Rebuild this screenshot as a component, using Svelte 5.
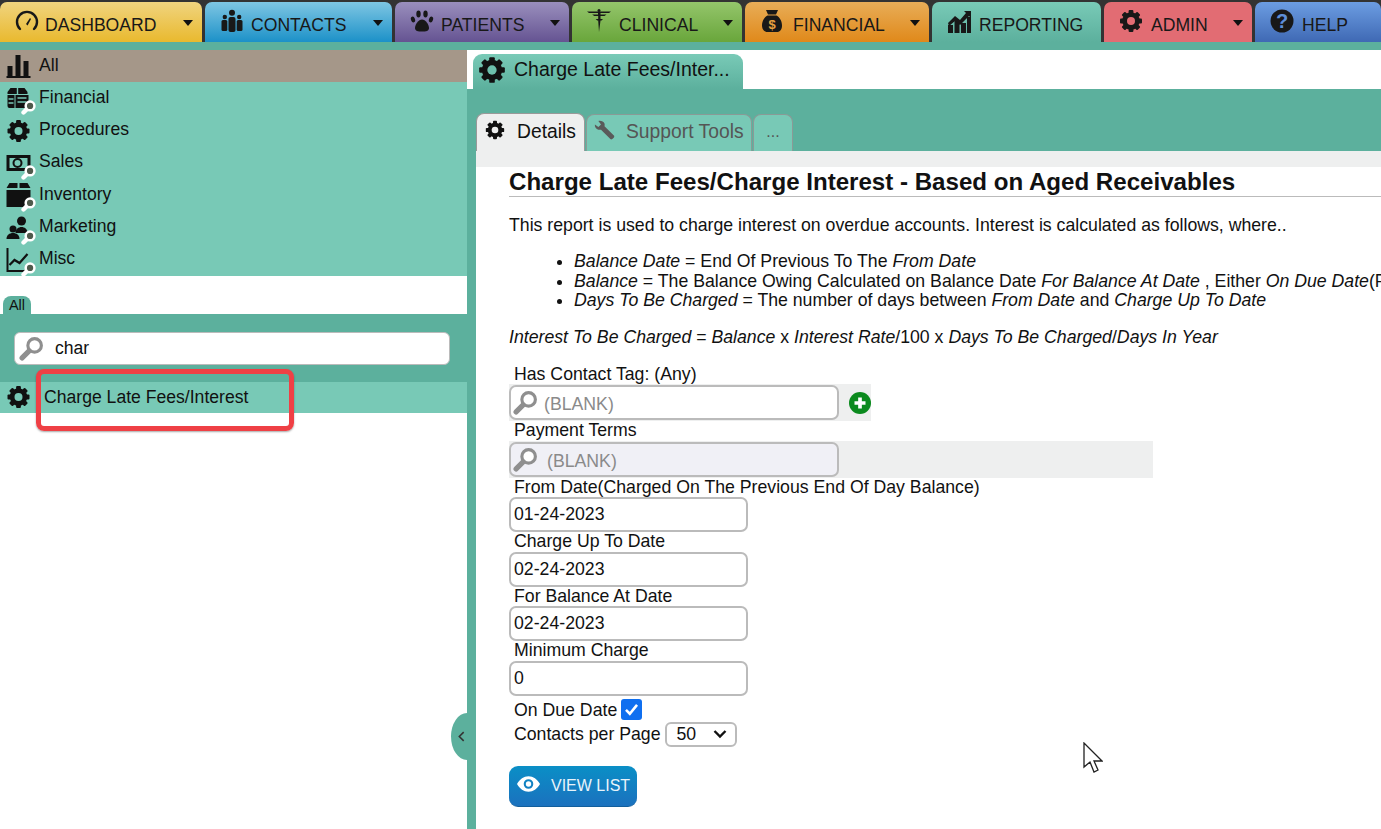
<script>
  const navTabs = [
    { label: 'DASHBOARD', cls: 'dashboard', icon: 'gauge', menu: true },
    { label: 'CONTACTS', cls: 'contacts', icon: 'people', menu: true },
    { label: 'PATIENTS', cls: 'patients', icon: 'paw', menu: true },
    { label: 'CLINICAL', cls: 'clinical', icon: 'caduceus', menu: true },
    { label: 'FINANCIAL', cls: 'financial', icon: 'bag', menu: true },
    { label: 'REPORTING', cls: 'reporting', icon: 'chart', menu: false },
    { label: 'ADMIN', cls: 'admin', icon: 'gear', menu: true },
    { label: 'HELP', cls: 'help', icon: 'question', menu: false }
  ]

  const sideItems = [
    { label: 'All', icon: 'bars', active: true },
    { label: 'Financial', icon: 'register', lens: true },
    { label: 'Procedures', icon: 'gear' },
    { label: 'Sales', icon: 'money', lens: true },
    { label: 'Inventory', icon: 'box', lens: true },
    { label: 'Marketing', icon: 'person', lens: true },
    { label: 'Misc', icon: 'line', lens: true }
  ]

  const dateFields = [
    { label: 'From Date(Charged On The Previous End Of Day Balance)', value: '01-24-2023' },
    { label: 'Charge Up To Date', value: '02-24-2023' },
    { label: 'For Balance At Date', value: '02-24-2023' },
    { label: 'Minimum Charge', value: '0' }
  ]
</script>

{#snippet glyph(name)}
  {#if name === 'gear'}
    <svg viewBox="0 0 24 24" class="icon">
      <circle cx="12" cy="12" r="6.4" fill="none" stroke="currentColor" stroke-width="4.6" />
      <g fill="currentColor">
        <rect x="9.6" y="1" width="4.8" height="22" rx="1" />
        <rect x="9.6" y="1" width="4.8" height="22" rx="1" transform="rotate(45 12 12)" />
        <rect x="9.6" y="1" width="4.8" height="22" rx="1" transform="rotate(90 12 12)" />
        <rect x="9.6" y="1" width="4.8" height="22" rx="1" transform="rotate(135 12 12)" />
      </g>
      <circle cx="12" cy="12" r="4" fill="var(--hole, #78c9b6)" />
    </svg>
  {:else if name === 'gauge'}
    <svg viewBox="0 0 24 24" class="icon">
      <path d="M5 20a10 10 0 1 1 14 0" fill="none" stroke="currentColor" stroke-width="2.4" stroke-linecap="round" />
      <path d="M11 15l4-6 1 1-3.400 6.400z" fill="currentColor" />
    </svg>
  {:else if name === 'people'}
    <svg viewBox="0 0 24 24" class="icon">
      <g fill="currentColor">
        <circle cx="12" cy="3.800" r="3" />
        <rect x="8.500" y="8" width="7" height="15" rx="2" />
        <circle cx="4.800" cy="8" r="2.200" />
        <rect x="1.500" y="11" width="5.800" height="11" rx="1.500" />
        <circle cx="19.200" cy="8" r="2.200" />
        <rect x="16.700" y="11" width="5.800" height="11" rx="1.500" />
      </g>
    </svg>
  {:else if name === 'paw'}
    <svg viewBox="0 0 24 24" class="icon">
      <g fill="currentColor">
        <ellipse cx="8.500" cy="5" rx="2.200" ry="3.400" />
        <ellipse cx="15.500" cy="5" rx="2.200" ry="3.400" />
        <ellipse cx="3" cy="10.500" rx="2" ry="3" transform="rotate(-20 3 10.500)" />
        <ellipse cx="21" cy="10.500" rx="2" ry="3" transform="rotate(20 21 10.500)" />
        <path d="M12 10.500c3.500 0 7 5 7 8.500 0 3-3 3.500-7 3.500s-7-.5-7-3.500c0-3.500 3.500-8.500 7-8.500z" />
      </g>
    </svg>
  {:else if name === 'caduceus'}
    <svg viewBox="0 0 24 24" class="icon">
      <g fill="currentColor">
        <path d="M0 2.500h24l-2 1.500h-8.500v1.500h6l-2 1.500h-4v3h2.500l-1.500 1.500h-1L12 23l-.8-11.500h-1L8.700 10h2.500V7h-4l-2-1.500h5.800V4H2z" />
        <circle cx="12" cy="1.500" r="1.500" />
      </g>
    </svg>
  {:else if name === 'bag'}
    <svg viewBox="0 0 24 24" class="icon">
      <path fill="currentColor" d="M6 1h12l-2 4.500H8zM7.500 6.500h9c3.500 2 5.500 6 5.500 10 0 4-2 6.500-5 6.500H7.500c-3 0-5.500-2.500-5.500-6.500s2-8 5.500-10z" />
      <text x="12" y="20" text-anchor="middle" class="bag-sign">$</text>
    </svg>
  {:else if name === 'chart'}
    <svg viewBox="0 0 24 24" class="icon">
      <g fill="currentColor">
        <rect x="1" y="16" width="5" height="8" />
        <rect x="7.500" y="12" width="5" height="12" />
        <rect x="14" y="14" width="5" height="10" />
        <rect x="20" y="8" width="4" height="16" />
        <path d="M1 14l7-7 5 4 6-7-2-2h7v7l-2-2-9 9-5-4-6 5z" />
      </g>
    </svg>
  {:else if name === 'question'}
    <svg viewBox="0 0 24 24" class="icon">
      <circle cx="12" cy="12" r="11.500" fill="currentColor" />
      <text x="12" y="19" text-anchor="middle" class="q-sign">?</text>
    </svg>
  {:else if name === 'bars'}
    <svg viewBox="0 0 24 24" class="icon">
      <g fill="currentColor">
        <rect x="1" y="12" width="5" height="10" />
        <rect x="9" y="1" width="5" height="21" />
        <rect x="17" y="7" width="5" height="15" />
        <rect x="0" y="22" width="24" height="2" />
      </g>
    </svg>
  {:else if name === 'register'}
    <svg viewBox="0 0 24 24" class="icon">
      <path fill="currentColor" d="M4 2h14l3 4v2H1V6zM1 9h7v13H3a2 2 0 0 1-2-2zM9 9h13v11a2 2 0 0 1-2 2H9z" />
      <path d="M2 13h5M2 17h5M11 12h9M11 16h9M11 2v6" stroke="#78c9b6" stroke-width="1.400" />
    </svg>
  {:else if name === 'money'}
    <svg viewBox="0 0 24 24" class="icon">
      <path fill-rule="evenodd" fill="currentColor" d="M0 4h24v16H0zM3 7v10h18V7z" />
      <circle cx="11" cy="12" r="4" fill="none" stroke="currentColor" stroke-width="2" />
    </svg>
  {:else if name === 'box'}
    <svg viewBox="0 0 24 24" class="icon">
      <path fill="currentColor" d="M3 0h8v5H0zM13 0h8l3 5H13zM0 7h24v17H0z" />
    </svg>
  {:else if name === 'person'}
    <svg viewBox="0 0 24 24" class="icon">
      <g fill="currentColor">
        <circle cx="15" cy="5" r="4.500" />
        <path d="M9 17c0-4 3-6 6-6s6 2 6 6z" />
        <circle cx="6.500" cy="13" r="3.500" />
        <path d="M0 23c0-4 3-6 6.500-6s6.500 2 6.500 6z" />
      </g>
    </svg>
  {:else if name === 'line'}
    <svg viewBox="0 0 24 24" class="icon">
      <path d="M1 0v23h23" fill="none" stroke="currentColor" stroke-width="2" />
      <path d="M3 17l5-5 5 3 8-9" fill="none" stroke="currentColor" stroke-width="2.200" />
    </svg>
  {/if}
{/snippet}

{#snippet lens(cls)}
  <svg viewBox="0 0 24 24" class={cls}>
    <path d="M9.500 14.500L3 21" stroke="#8f8f8f" stroke-width="5" stroke-linecap="round" />
    <circle cx="15" cy="9" r="6.500" fill="#fff" stroke="#8f8f8f" stroke-width="3" />
  </svg>
{/snippet}

{#snippet badge()}
  <svg viewBox="0 0 24 24" class="minilens">
    <path d="M9 15L4 20" stroke="#fff" stroke-width="7" stroke-linecap="round" />
    <circle cx="14.500" cy="9.500" r="7" fill="#4f5a4c" stroke="#fff" stroke-width="4" />
  </svg>
{/snippet}

<div class="page">
  <nav class="topnav">
    {#each navTabs as tab}
      <div class="navtab {tab.cls}">
        <span class="navicon">{@render glyph(tab.icon)}</span>
        <span class="navlabel">{tab.label}</span>
        {#if tab.menu}<span class="caret"></span>{/if}
      </div>
    {/each}
  </nav>

  <div class="workspace">
    <aside class="sidebar">
      <ul class="sidelist">
        {#each sideItems as item}
          <li class:active={item.active}>
            <span class="sideicon">
              {@render glyph(item.icon)}
              {#if item.lens}{@render badge()}{/if}
            </span>
            <span class="sidelabel">{item.label}</span>
          </li>
        {/each}
      </ul>

      <div class="alltab">All</div>
      <div class="searchbar">
        <div class="searchbox">
          {@render lens('searchlens')}
          <span>char</span>
        </div>
      </div>
      <div class="result">
        <span class="sideicon">{@render glyph('gear')}</span>
        Charge Late Fees/Interest
      </div>

      <div class="annotation"></div>
      <button class="collapse" aria-label="Collapse">
        <svg viewBox="0 0 8 12" width="7" height="11">
          <path d="M6.500 1L1.500 6l5 5" fill="none" stroke="#333" stroke-width="1.800" />
        </svg>
      </button>
    </aside>

    <main class="main">
      <div class="doctabs">
        <div class="doctab">
          <span class="docicon">{@render glyph('gear')}</span>
          Charge Late Fees/Inter...
        </div>
      </div>

      <div class="panel">
        <div class="subtabs">
          <div class="subtab current">
            <span class="subicon">{@render glyph('gear')}</span>
            Details
          </div>
          <div class="subtab support">
            <svg viewBox="0 0 24 24" class="wrench">
              <path fill="#5a5a5a" d="M1 5l4-4c3-.5 6 .5 7 3 .3 1 .3 2 0 3l11 11c1 1.500-2.500 5-4 4L8 11c-1 .3-2 .3-3 0C2.500 10 .5 8 1 5l4 3 3-3-3-4z" />
            </svg>
            Support Tools
          </div>
          <div class="subtab more">...</div>
        </div>

        <div class="sheet">
          <div class="report">
            <h1>Charge Late Fees/Charge Interest - Based on Aged Receivables</h1>
            <p class="intro">This report is used to charge interest on overdue accounts. Interest is calculated as follows, where..</p>
            <ul class="terms">
              <li><i>Balance Date</i> = End Of Previous To The <i>From Date</i></li>
              <li><i>Balance</i> = The Balance Owing Calculated on Balance Date <i>For Balance At Date</i> , Either <i>On Due Date</i>(For Balance At Date</li>
              <li><i>Days To Be Charged</i> = The number of days between <i>From Date</i> and <i>Charge Up To Date</i></li>
            </ul>
            <p class="formula"><i>Interest To Be Charged</i> = <i>Balance</i> x <i>Interest Rate</i>/100 x <i>Days To Be Charged</i>/<i>Days In Year</i></p>

            <label class="fieldlabel" for="tag">Has Contact Tag: (Any)</label>
            <div class="lookuprow tagrow">
              <div class="lookup" id="tag">
                {@render lens('fieldlens')}
                <span>(BLANK)</span>
              </div>
              <svg viewBox="0 0 24 24" class="plus">
                <circle cx="12" cy="12" r="12" fill="#0b8a1e" />
                <path d="M12 6v12M6 12h12" stroke="#fff" stroke-width="4" />
              </svg>
            </div>

            <label class="fieldlabel" for="terms">Payment Terms</label>
            <div class="lookuprow termsrow">
              <div class="lookup disabled" id="terms">
                {@render lens('fieldlens')}
                <span>(BLANK)</span>
              </div>
            </div>

            {#each dateFields as field}
              <div class="fieldlabel">{field.label}</div>
              <div class="textbox">{field.value}</div>
            {/each}

            <div class="optionrow">
              On Due Date
              <span class="checkbox">
                <svg viewBox="0 0 20 20" width="17" height="17">
                  <path d="M3.500 10.500l4.500 4.500L16.500 4.500" fill="none" stroke="#fff" stroke-width="3" />
                </svg>
              </span>
            </div>
            <div class="pagerow">
              Contacts per Page
              <span class="selectbox">
                50
                <svg viewBox="0 0 14 10" width="14" height="10">
                  <path d="M1.500 2L7 7.500 12.500 2" fill="none" stroke="#111" stroke-width="2.400" />
                </svg>
              </span>
            </div>

            <button class="viewlist">
              <svg viewBox="0 0 24 16" class="eye">
                <path fill="#fff" fill-rule="evenodd" d="M0 8c3-5 7-8 12-8s9 3 12 8c-3 5-7 8-12 8S3 13 0 8zm12-5a5 5 0 1 0 0 10 5 5 0 0 0 0-10z" />
                <circle cx="12" cy="8" r="2.800" fill="#fff" />
              </svg>
              VIEW LIST
            </button>
          </div>
        </div>
      </div>
    </main>
  </div>

  <svg class="pointer" viewBox="0 0 20 31" width="20" height="31">
    <path d="M1 1v24l6-5 4 10 4-2-4-9h8z" fill="#fff" stroke="#222" stroke-width="1.300" />
  </svg>
</div>

<style>
  :global(body) {
    background: #fff;
    font-family: "Liberation Sans", Arial, sans-serif;
  }

  .page {
    color: #111;
    display: flex;
    flex-direction: column;
    height: 829px;
    overflow: hidden;
    position: relative;
    width: 1381px;
  }

  .topnav {
    background: #333;
    display: grid;
    flex: none;
    gap: 3px;
    grid-template-columns: 202px 187px 174px 170px 184px 169px 148px 1fr;
    height: 42px;
    padding-top: 2px;
    box-sizing: border-box;
  }

  .navtab {
    align-items: center;
    border-radius: 7px 7px 0 0;
    color: #181818;
    display: flex;
    font-size: 17.6px;
    gap: 7px;
    padding: 0 0 0 15px;
    position: relative;
    white-space: nowrap;
  }

  .navlabel {
    margin-top: 6px;
  }

  .navicon {
    display: block;
    flex: none;
    height: 24px;
    margin-top: -2px;
    width: 24px;
    --hole: #e26d74;
  }

  .icon {
    display: block;
    height: 100%;
    width: 100%;
  }

  .bag-sign,
  .q-sign {
    fill: #e8a040;
    font-family: "Liberation Sans", Arial, sans-serif;
    font-size: 13px;
    font-weight: bold;
  }

  .q-sign {
    fill: #5e8fd8;
    font-size: 20px;
  }

  .caret {
    border-left: 5.500px solid transparent;
    border-right: 5.500px solid transparent;
    border-top: 6px solid #111;
    position: absolute;
    right: 9px;
    top: 18px;
  }

  .dashboard { background: linear-gradient(#f0d47f, #e9b92e); gap: 6px; }
  .contacts { background: linear-gradient(#7ec6e3, #1c91c8); }
  .patients { background: linear-gradient(#9a8fbd, #655392); }
  .clinical { background: linear-gradient(#94c56b, #69a63b); gap: 8px; }
  .financial { background: linear-gradient(#e8ad58, #e0891a); gap: 9px; }
  .reporting { background: linear-gradient(#79cab7, #5cb09d); gap: 8px; }
  .admin { background: #e26c73; gap: 8px; }
  .help { background: linear-gradient(#6c9de2, #3f69b4); gap: 8px; }

  .workspace {
    border-top: 8px solid #5cb09d;
    display: flex;
    flex: 1;
    min-height: 0;
  }

  .sidebar {
    background: #fff;
    flex: none;
    position: relative;
    width: 467px;
  }

  .sidelist {
    background: #78c9b6;
    list-style: none;
    margin: 0;
    padding: 0;
  }

  .sidelist li,
  .result {
    align-items: center;
    display: flex;
    font-size: 17.6px;
    gap: 8px;
    height: 32.290px;
    padding-left: 6px;
    --hole: #78c9b6;
  }

  .sidelabel {
    margin-top: -2px;
  }

  .sidelist li.active {
    background: #a59789;
    --hole: #a59789;
  }

  .sideicon {
    display: block;
    flex: none;
    height: 24px;
    position: relative;
    width: 25px;
  }

  .minilens {
    bottom: -5px;
    height: 15px;
    position: absolute;
    right: -5px;
    width: 15px;
  }

  .alltab {
    background: #5cb09d;
    border-radius: 8px 8px 0 0;
    font-size: 14.500px;
    height: 18px;
    line-height: 19px;
    margin: 20px 0 0 3px;
    text-align: center;
    width: 28px;
  }

  .searchbar {
    background: #5cb09d;
    height: 68px;
    padding: 18px 17px 0 14px;
    box-sizing: border-box;
  }

  .searchbox {
    align-items: center;
    background: #fff;
    border: 1px solid #bbb;
    border-radius: 6px;
    box-sizing: border-box;
    display: flex;
    font-size: 17.6px;
    gap: 11px;
    height: 33px;
    padding-left: 4px;
  }

  .searchlens {
    height: 25px;
    width: 25px;
  }

  .result {
    background: #78c9b6;
    height: 31px;
    gap: 13px;
  }

  .annotation {
    border: 5px solid #ef4045;
    border-radius: 8px;
    box-shadow: 0 1px 2px rgba(0, 0, 0, 0.35);
    box-sizing: border-box;
    height: 62px;
    left: 36px;
    position: absolute;
    top: 319px;
    width: 258px;
  }

  .collapse {
    background: #5cb09d;
    border: 0;
    border-radius: 100% 0 0 100% / 50% 0 0 50%;
    height: 47px;
    padding: 2px 0 0 5px;
    position: absolute;
    right: 0;
    top: 663px;
    width: 16px;
  }

  .main {
    border-left: 9px solid #5cb09d;
    box-shadow: inset 1px 0 0 #888;
    display: flex;
    flex: 1;
    flex-direction: column;
    min-width: 0;
    position: relative;
  }

  .doctabs {
    background: #fff;
    box-sizing: border-box;
    height: 39px;
    margin-left: -9px;
    padding: 4px 0 0 6px;
  }

  .doctab {
    align-items: center;
    background: linear-gradient(#79cab7, #5cb09d);
    border-radius: 9px 9px 0 0;
    box-sizing: border-box;
    display: flex;
    font-size: 19.500px;
    gap: 8px;
    height: 35px;
    padding: 0 0 4px 5px;
    width: 270px;
    --hole: #6dbfac;
  }

  .docicon {
    display: block;
    height: 28px;
    width: 28px;
  }

  .panel {
    background: #5cb09d;
    display: flex;
    flex: 1;
    flex-direction: column;
    min-height: 0;
  }

  .subtabs {
    align-items: flex-end;
    display: flex;
    flex: none;
    gap: 1px;
    height: 62px;
  }

  .subtab {
    align-items: center;
    background: #78c9b6;
    border: 1px solid #8a9a96;
    border-bottom: 0;
    border-radius: 8px 8px 0 0;
    box-sizing: border-box;
    color: #555;
    display: flex;
    flex: none;
    font-size: 19.300px;
    height: 37px;
    padding-bottom: 2px;
    white-space: nowrap;
  }

  .current {
    background: #eeefef;
    border-color: #999;
    color: #111;
    gap: 12px;
    height: 38px;
    padding-left: 8px;
    width: 109px;
    --hole: #eeefef;
  }

  .subicon {
    display: block;
    height: 20px;
    margin-top: -4px;
    width: 20px;
  }

  .support {
    gap: 11px;
    padding-left: 7px;
    width: 166px;
  }

  .wrench {
    flex: none;
    height: 21px;
    margin-top: -4px;
    width: 21px;
  }

  .more {
    font-size: 16px;
    justify-content: center;
    width: 40px;
  }

  .sheet {
    background: #fff;
    border-top: 16px solid #eeefef;
    flex: 1;
    min-height: 0;
    overflow: hidden;
  }

  .report {
    font-size: 17.700px;
    padding: 0 0 0 33px;
    white-space: nowrap;
  }

  h1 {
    border-bottom: 1px solid #bbb;
    font-size: 24.100px;
    font-weight: bold;
    height: 29px;
    line-height: 30px;
    margin: 0;
  }

  .intro {
    line-height: 20px;
    margin: 18px 0 0;
  }

  .terms {
    line-height: 19.500px;
    margin: 17px 0 0;
    padding-left: 65px;
  }

  .formula {
    line-height: 20px;
    margin: 16px 0 0;
  }

  .fieldlabel {
    display: block;
    height: 19.600px;
    line-height: 19px;
    padding-left: 5px;
  }

  .fieldlabel[for="tag"] {
    margin-top: 18px;
  }

  .lookuprow {
    align-items: center;
    background: #eeefef;
    display: flex;
    height: 37px;
    width: 362px;
  }

  .termsrow {
    width: 644px;
  }

  .lookup {
    align-items: center;
    background: #fff;
    border: 2px solid #bbb;
    border-radius: 7px;
    box-sizing: border-box;
    color: #8a8a8a;
    display: flex;
    gap: 6px;
    height: 35px;
    padding-left: 2px;
    width: 330px;
  }

  .lookup span {
    margin-top: 4px;
  }

  .lookup.disabled {
    background: #f0f0f6;
    gap: 9px;
  }

  .fieldlens {
    flex: none;
    height: 25px;
    width: 25px;
  }

  .plus {
    height: 22px;
    margin-left: 10px;
    width: 22px;
  }

  .textbox {
    align-items: center;
    border: 2px solid #bbb;
    border-radius: 7px;
    box-sizing: border-box;
    display: flex;
    height: 35px;
    padding-left: 3px;
    width: 239px;
  }

  .optionrow {
    align-items: center;
    display: flex;
    gap: 4px;
    height: 25px;
    margin-top: 2px;
    padding-left: 5px;
  }

  .checkbox {
    align-items: center;
    background: #0f6ff0;
    border-radius: 3px;
    display: flex;
    height: 21px;
    justify-content: center;
    margin-top: -2px;
    width: 21px;
  }

  .pagerow {
    align-items: center;
    display: flex;
    gap: 4px;
    height: 24px;
    margin-top: -1px;
    padding-left: 5px;
  }

  .selectbox {
    align-items: center;
    border: 2px solid #bbb;
    border-radius: 6px;
    box-sizing: border-box;
    display: flex;
    flex: none;
    gap: 17px;
    height: 25px;
    padding-left: 10px;
    width: 72px;
  }

  .viewlist {
    align-items: center;
    background: linear-gradient(#0a8fc6, #1b71be);
    border: 0;
    border-bottom: 1px solid #125f9c;
    border-radius: 9px;
    color: #e8f4fb;
    display: flex;
    font-family: inherit;
    font-size: 16px;
    font-weight: normal;
    gap: 11px;
    height: 41px;
    margin-top: 20px;
    padding: 0 0 0 8px;
    width: 128px;
  }

  .eye {
    height: 16px;
    margin-top: -4px;
    width: 23px;
  }

  .pointer {
    left: 1083px;
    position: absolute;
    top: 742px;
  }
</style>
